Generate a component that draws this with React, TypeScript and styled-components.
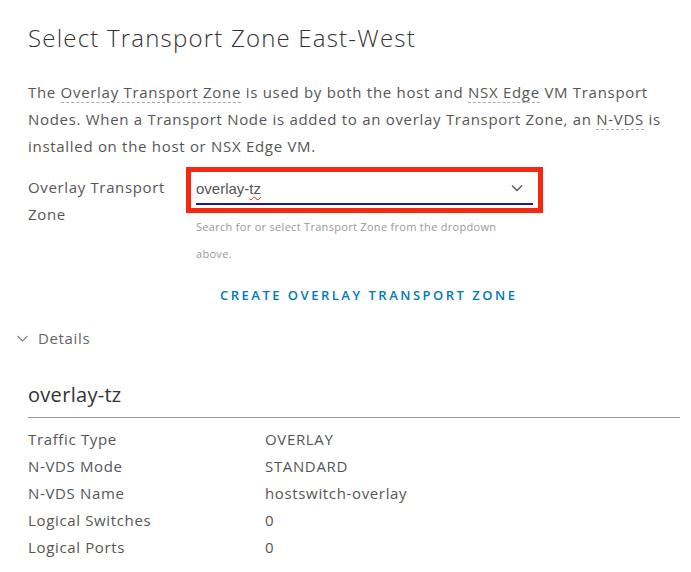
import React from 'react';
import styled, { createGlobalStyle } from 'styled-components';

const GlobalStyle = createGlobalStyle`
  body {
    margin: 0;
    padding: 0;
    background: #fff;
    font-family: "Open Sans", Lato, sans-serif;
    color: #565656;
  }
`;

const Page = styled.div`
  width: 691px;
  height: 572px;
  overflow: hidden;
  letter-spacing: 0.65px;
`;

const Section = styled.div`
  padding-left: 28px;
`;

const Title = styled.h2`
  margin: 22px 0 0;
  font-size: 24px;
  line-height: 32px;
  font-weight: 300;
  letter-spacing: 1.2px;
  color: #333;
`;

const Intro = styled.p`
  margin: 25px 0 0;
  font-size: 15px;
  line-height: 27px;
  white-space: nowrap;
  letter-spacing: 0.7px;
`;

const Term = styled.span`
  border-bottom: 1px dashed #aaa;
`;

const FormRow = styled.div`
  display: flex;
  margin-top: 14px;
`;

const Label = styled.div`
  width: 158px;
  font-size: 15px;
  line-height: 27px;
`;

const Field = styled.div`
  margin-top: -7px;
  width: 357px;
`;

const Highlight = styled.div`
  border: 5px solid #f5290f;
  height: 36px;
  padding: 0 5px;
`;

const SelectBox = styled.div`
  display: flex;
  align-items: center;
  justify-content: space-between;
  height: 30px;
  margin-top: 1px;
  border-bottom: 2px solid #1a1aa6;
  font-family: "Liberation Sans", Arial, sans-serif;
  font-size: 15px;
  letter-spacing: 0;
  color: #555;
`;

const Misspelled = styled.span`
  text-decoration: underline wavy #e02020;
  text-decoration-thickness: 1px;
  text-underline-offset: 2px;
`;

const Chevron = styled.svg`
  margin-right: 10px;
`;

const Helper = styled.div`
  padding-left: 10px;
  font-size: 11px;
  line-height: 27px;
  letter-spacing: 0.3px;
  color: #999;
`;

const CreateButton = styled.button`
  display: block;
  margin: 18px 0 0 192px;
  padding: 0;
  border: none;
  background: none;
  font-family: "Open Sans", sans-serif;
  font-size: 13px;
  line-height: 20px;
  font-weight: 600;
  letter-spacing: 2.5px;
  color: #0079b8;
  cursor: pointer;
`;

const DetailsToggle = styled.div`
  display: flex;
  align-items: center;
  gap: 10px;
  margin-top: 23px;
  padding-left: 17px;
  font-size: 15px;
  line-height: 20px;
  color: #666;
`;

const DetailsTitle = styled.div`
  margin: 34px 11px 0 0;
  padding-bottom: 9px;
  border-bottom: 1px solid #9a9a9a;
  font-size: 20px;
  line-height: 26px;
  letter-spacing: 0.3px;
  color: #333;
`;

const PropList = styled.div`
  margin-top: 8px;
`;

const PropRow = styled.div`
  display: flex;
  font-size: 15px;
  line-height: 27px;
`;

const PropKey = styled.div`
  width: 237px;
`;

const props: [string, string][] = [
  ['Traffic Type', 'OVERLAY'],
  ['N-VDS Mode', 'STANDARD'],
  ['N-VDS Name', 'hostswitch-overlay'],
  ['Logical Switches', '0'],
  ['Logical Ports', '0'],
];

const App = () => {
  return (
    <Page>
      <GlobalStyle />
      <Section>
        <Title>Select Transport Zone East-West</Title>
        <Intro>
          The <Term>Overlay Transport Zone</Term> is used by both the host and <Term>NSX Edge</Term> VM Transport
          <br />
          Nodes. When a Transport Node is added to an overlay Transport Zone, an <Term>N-VDS</Term> is
          <br />
          installed on the host or NSX Edge VM.
        </Intro>
        <FormRow>
          <Label>
            Overlay Transport
            <br />
            Zone
          </Label>
          <Field>
            <Highlight>
              <SelectBox>
                <span>
                  overlay-<Misspelled>tz</Misspelled>
                </span>
                <Chevron width="12" height="8" viewBox="0 0 12 8">
                  <path d="M1 1.5 L6 6.5 L11 1.5" fill="none" stroke="#555" strokeWidth="1.4" />
                </Chevron>
              </SelectBox>
            </Highlight>
            <Helper>
              Search for or select Transport Zone from the dropdown
              <br />
              above.
            </Helper>
          </Field>
        </FormRow>
        <CreateButton>CREATE OVERLAY TRANSPORT ZONE</CreateButton>
      </Section>
      <DetailsToggle>
        <svg width="11" height="7" viewBox="0 0 11 7">
          <path d="M0.5 0.8 L5.5 6 L10.5 0.8" fill="none" stroke="#777" strokeWidth="1.1" />
        </svg>
        Details
      </DetailsToggle>
      <Section>
        <DetailsTitle>overlay-tz</DetailsTitle>
        <PropList>
          {props.map(([k, v]) => (
            <PropRow key={k}>
              <PropKey>{k}</PropKey>
              <div>{v}</div>
            </PropRow>
          ))}
        </PropList>
      </Section>
    </Page>
  );
};

export default App;
